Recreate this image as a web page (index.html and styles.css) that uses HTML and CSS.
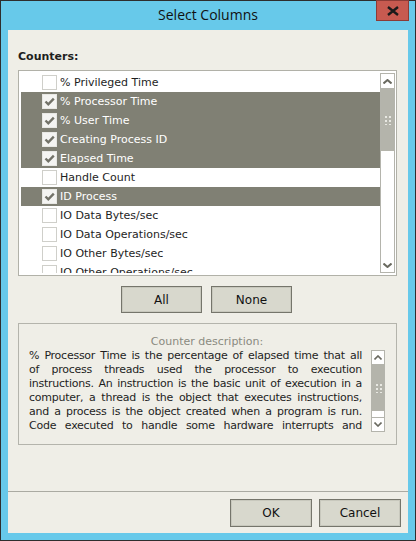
FILE: index.html
```html
<!DOCTYPE html>
<html lang="en">
<head>
    <meta charset="UTF-8">
    <title>Select Columns</title>
    <link rel="stylesheet" href="styles.css">
</head>
<body>
    <div class="window">
        <div class="titlebar">
            <span class="title">Select Columns</span>
            <button class="close" title="Close">
                <svg width="12" height="10" viewBox="0 0 12 10"><path d="M1 1 L11 9 M11 1 L1 9" stroke="#1a1a1a" stroke-width="2.4"/></svg>
            </button>
        </div>
        <div class="client">
            <div class="label">Counters:</div>
            <div class="list">
                <div class="rows">
                    <div class="row"><span class="box"></span>% Privileged Time</div>
                    <div class="row selected"><span class="box"><svg class="tick" viewBox="0 0 13 13"><path d="M2.5 6.5 L5.3 9.3 L10.8 3.6"/></svg></span>% Processor Time</div>
                    <div class="row selected"><span class="box"><svg class="tick" viewBox="0 0 13 13"><path d="M2.5 6.5 L5.3 9.3 L10.8 3.6"/></svg></span>% User Time</div>
                    <div class="row selected"><span class="box"><svg class="tick" viewBox="0 0 13 13"><path d="M2.5 6.5 L5.3 9.3 L10.8 3.6"/></svg></span>Creating Process ID</div>
                    <div class="row selected"><span class="box"><svg class="tick" viewBox="0 0 13 13"><path d="M2.5 6.5 L5.3 9.3 L10.8 3.6"/></svg></span>Elapsed Time</div>
                    <div class="row"><span class="box"></span>Handle Count</div>
                    <div class="row selected"><span class="box"><svg class="tick" viewBox="0 0 13 13"><path d="M2.5 6.5 L5.3 9.3 L10.8 3.6"/></svg></span>ID Process</div>
                    <div class="row"><span class="box"></span>IO Data Bytes/sec</div>
                    <div class="row"><span class="box"></span>IO Data Operations/sec</div>
                    <div class="row"><span class="box"></span>IO Other Bytes/sec</div>
                    <div class="row"><span class="box"></span>IO Other Operations/sec</div>
                </div>
                <div class="vscroll">
                    <div class="arrow up"><svg width="9" height="5" viewBox="0 0 9 5"><path d="M0.5 4.5 L4.5 1 L8.5 4.5" fill="none" stroke="#6a6a60" stroke-width="2"/></svg></div>
                    <div class="thumb tall"><span class="grip"></span></div>
                    <div class="track"></div>
                    <div class="arrow down"><svg width="9" height="5" viewBox="0 0 9 5"><path d="M0.5 0.5 L4.5 4 L8.5 0.5" fill="none" stroke="#6a6a60" stroke-width="2"/></svg></div>
                </div>
            </div>
            <div class="select-buttons">
                <button class="btn">All</button>
                <button class="btn">None</button>
            </div>
            <div class="group">
                <div class="legend">Counter description:</div>
                <div class="desc">
                    <div class="desc-text">
                        <span>% Processor Time is the percentage of elapsed time that all</span>
                        <span>of process threads used the processor to execution</span>
                        <span>instructions. An instruction is the basic unit of execution in a</span>
                        <span>computer, a thread is the object that executes instructions,</span>
                        <span>and a process is the object created when a program is run.</span>
                        <span>Code executed to handle some hardware interrupts and</span>
                    </div>
                    <div class="vscroll small">
                        <div class="arrow up"><svg width="8" height="5" viewBox="0 0 8 5"><path d="M0.5 4.5 L4 1 L7.5 4.5" fill="none" stroke="#6a6a60" stroke-width="1.6"/></svg></div>
                        <div class="thumb"><span class="grip"></span></div>
                        <div class="arrow down"><svg width="8" height="5" viewBox="0 0 8 5"><path d="M0.5 0.5 L4 4 L7.5 0.5" fill="none" stroke="#6a6a60" stroke-width="1.6"/></svg></div>
                    </div>
                </div>
            </div>
            <div class="footer">
                <button class="btn wide">OK</button>
                <button class="btn wide">Cancel</button>
            </div>
        </div>
    </div>
</body>
</html>
```

FILE: styles.css
```css
body {
    margin: 0;
    font-family: "DejaVu Sans", Tahoma, sans-serif;
    font-size: 11px;
    color: #1e1e1e;
}
.window {
    width: 416px;
    height: 541px;
    box-sizing: border-box;
    border: 1px solid #2e2e2e;
    background: #67c9ea;
    padding: 0 7px 7px 7px;
    display: flex;
    flex-direction: column;
}
.titlebar {
    position: relative;
    height: 29px;
    display: flex;
    align-items: center;
    justify-content: center;
}
.title {
    font-family: "Open Sans", sans-serif;
    font-size: 14px;
    color: #111;
    margin-top: -2px;
}
.close {
    position: absolute;
    right: -1px;
    top: -1px;
    width: 33px;
    height: 21px;
    padding: 0;
    border: 1px solid #8c3b36;
    background: #c75a50;
    display: flex;
    align-items: center;
    justify-content: center;
}
.client {
    flex: 1;
    background: #efeee7;
    padding: 0 7px 0 10px;
    display: flex;
    flex-direction: column;
}
.label {
    font-weight: bold;
    margin-top: 20px;
    height: 20px;
}
.list {
    width: 379px;
    height: 206px;
    box-sizing: border-box;
    border: 1px solid #b1b1a8;
    background: #fff;
    padding: 2px 1px 2px 2px;
    display: flex;
}
.rows {
    flex: 1;
    overflow: hidden;
}
.row {
    height: 19px;
    display: flex;
    align-items: center;
    padding-left: 21px;
    white-space: nowrap;
}
.row.selected {
    background: #808074;
    color: #fff;
}
.box {
    width: 15px;
    height: 15px;
    box-sizing: border-box;
    border: 1px solid #cfcfca;
    background: #fff;
    margin-right: 3px;
    flex: none;
    display: flex;
}
.row.selected .box {
    border-color: #e8e8e4;
    background: #f4f4f2;
}
.tick {
    width: 13px;
    height: 13px;
}
.tick path {
    fill: none;
    stroke: #727268;
    stroke-width: 2.4;
}
.vscroll {
    width: 15px;
    box-sizing: border-box;
    border: 1px solid #b4b4ac;
    background: #fff;
    display: flex;
    flex-direction: column;
    flex: none;
}
.arrow {
    height: 14px;
    display: flex;
    align-items: center;
    justify-content: center;
    flex: none;
}
.arrow.up {
    border-bottom: 1px solid #b4b4ac;
}
.thumb {
    background: #b4b4ab;
    height: 62px;
    display: flex;
    align-items: center;
    justify-content: center;
    flex: none;
}
.track {
    flex: 1;
}
.grip {
    width: 7px;
    height: 10px;
    background-image: radial-gradient(#e8e8e2 1.2px, transparent 1.3px);
    background-size: 4px 4px;
}
.select-buttons {
    display: flex;
    justify-content: center;
    gap: 9px;
    margin: 10px 0 10px -6px;
}
.btn {
    width: 82px;
    height: 28px;
    font-family: "DejaVu Sans", Tahoma, sans-serif;
    font-size: 12px;
    color: #111;
    background: #d8d8cd;
    border: 1px solid #75756b;
    box-shadow: inset 0 0 0 1px #c8c8bd;
    padding: 0;
}
.select-buttons .btn {
    width: 81px;
    height: 27px;
}
.group {
    width: 379px;
    height: 122px;
    box-sizing: border-box;
    border: 1px solid #b4b4ac;
    padding: 11px 11px 0 10px;
}
.legend {
    text-align: center;
    color: #8a8a80;
    font-size: 11px;
    height: 14px;
    line-height: 14px;
}
.desc {
    display: flex;
    gap: 9px;
}
.desc-text {
    flex: 1;
    min-width: 0;
    overflow: hidden;
    font-size: 11px;
    line-height: 14px;
    letter-spacing: -0.25px;
}
.desc-text span {
    display: block;
    text-align: justify;
    text-align-last: justify;
}
.vscroll.small {
    width: 14px;
    height: 82px;
    margin-top: 1px;
}
.vscroll.small .arrow {
    height: 13px;
}
.vscroll.small .arrow.down {
    border-top: 1px solid #b4b4ac;
    margin-top: auto;
}
.vscroll.small .thumb {
    height: 46px;
}
.footer {
    margin: auto -7px 0 -10px;
    border-top: 1px solid #aaaaa2;
    height: 42px;
    box-sizing: border-box;
    display: flex;
    justify-content: flex-end;
    align-items: flex-start;
    gap: 7px;
    padding: 7px 7px 0 0;
}
```
